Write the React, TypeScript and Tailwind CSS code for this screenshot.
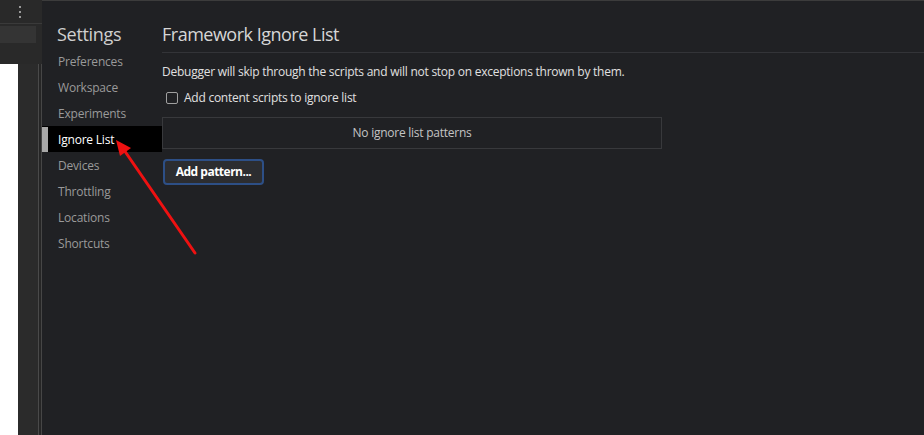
import type { FC } from "react";
import clsx from "clsx";

const navItems = [
  "Preferences",
  "Workspace",
  "Experiments",
  "Ignore List",
  "Devices",
  "Throttling",
  "Locations",
  "Shortcuts",
];

const font = { fontFamily: '"Segoe UI", "Open Sans", "Noto Sans", sans-serif' };

const LeftStrip: FC = () => (
  <div className="flex h-full w-[42px] shrink-0 flex-col bg-[#292929]">
    {/* Toolbar with kebab menu */}
    <div className="flex h-[24px] items-center justify-end border-b border-[#3a3a3a] pr-[21px]">
      <div className="flex flex-col gap-[3px]">
        <span className="h-[2px] w-[2px] bg-[#9a9a9a]" />
        <span className="h-[2px] w-[2px] bg-[#9a9a9a]" />
        <span className="h-[2px] w-[2px] bg-[#9a9a9a]" />
      </div>
    </div>
    <div className="mt-[2px] h-[17px] w-[36px] bg-[#343434]" />
    <div className="flex flex-1 pt-[21px]">
      <div className="w-[18px] bg-white" />
      <div className="w-[20px] bg-[#2b2b2b]" />
      <div className="w-px bg-[#4a4a4a]" />
      <div className="w-[2px] bg-[#262626]" />
      <div className="w-px bg-[#464646]" />
    </div>
  </div>
);

const Sidebar: FC = () => (
  <div className="flex w-[120px] shrink-0 flex-col">
    <div className="h-[47px] pl-[15px] pt-[21px] text-[18px] leading-[24px] tracking-[-0.3px] text-[#cfcfcf]">
      Settings
    </div>
    {navItems.map((item) => {
      const active = item === "Ignore List";
      return (
        <div
          key={item}
          className={clsx(
            "flex h-[26px] items-center pt-px text-[12px] tracking-[-0.2px]",
            active ? "bg-black text-white" : "text-[#9a9a9a]"
          )}
        >
          <span className={clsx("h-full w-[6px]", active ? "bg-[#a8a8a8]" : "bg-transparent")} />
          <span className="pl-[10px]">{item}</span>
        </div>
      );
    })}
  </div>
);

export default function App() {
  return (
    <div
      className="relative flex h-[435px] w-[924px] overflow-hidden bg-[#202124]"
      style={font}
    >
      <LeftStrip />
      <div className="flex flex-1 border-t border-[#3c3c3c]">
        <Sidebar />
        {/* Main content */}
        <div className="flex flex-1 flex-col">
          <div className="border-b border-[#333438] pb-[6px] pt-[21px] text-[18px] leading-[24px] tracking-[-0.5px] text-[#d6d6d6]">
            Framework Ignore List
          </div>
          <p className="mt-[11px] text-[12px] leading-[16px] tracking-[-0.25px] text-[#e0e0e0]">
            Debugger will skip through the scripts and will not stop on exceptions thrown by them.
          </p>
          <label className="mt-[10px] flex h-[16px] items-center pl-[4px] text-[12px] tracking-[-0.25px] text-[#e0e0e0]">
            <span className="h-[12px] w-[12px] rounded-[2px] border border-[#a0a0a0]" />
            <span className="pl-[6px]">Add content scripts to ignore list</span>
          </label>
          <div className="mt-[11px] flex h-[32px] w-[500px] items-center justify-center border border-[#38393c] text-[12px] tracking-[-0.25px] text-[#c4c4c4]">
            No ignore list patterns
          </div>
          <button className="ml-px mt-[10px] h-[26px] w-[101px] rounded-[4px] border-2 border-[#2d4f86] bg-[#2c2d30] text-[12px] font-bold tracking-[-0.5px] text-white">
            Add pattern...
          </button>
        </div>
      </div>

      {/* Annotation arrow */}
      <svg
        className="pointer-events-none absolute left-0 top-0"
        width="924"
        height="435"
        viewBox="0 0 924 435"
      >
        <line x1="195" y1="253" x2="124" y2="150" stroke="#ee1111" strokeWidth="3" strokeLinecap="round" />
        <polygon points="116,140 131,148 120,156" fill="#ee1111" />
      </svg>
    </div>
  );
}
